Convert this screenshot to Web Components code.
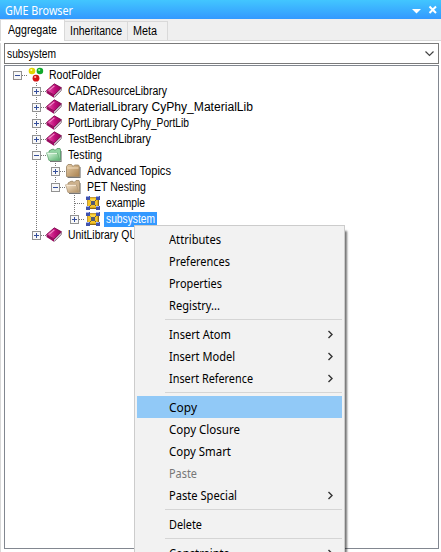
<!DOCTYPE html>
<html lang="en">
<head>
<meta charset="utf-8">
<title>GME Browser</title>
<style>
html,body{margin:0;height:100%;overflow:hidden;background:#fff}
body{font:12px/16px "Liberation Sans",Arial,sans-serif;color:#000}
</style>
</head>
<body>
<gme-browser></gme-browser>
<script>
function define(name, html, setup) {
  customElements.define(name, class extends HTMLElement {
    connectedCallback() {
      if (this.shadowRoot) return;
      const root = this.attachShadow({ mode: 'open' });
      root.innerHTML = html;
      if (setup) setup(this, root);
    }
  });
}

// A single-line label condensed or widened to fill the width in "w".
define('fit-label', `<style>:host{display:inline-block;white-space:pre;flex:none}span{display:inline-block;transform-origin:0 50%}</style><span><slot></slot></span>`,
  (el, root) => {
    const span = root.querySelector('span'), w = +el.getAttribute('w');
    if (!w) return;
    const natural = span.getBoundingClientRect().width;
    span.style.transform = `scaleX(${w / natural})`;
    el.style.width = w + 'px';
  });

const icons = {
  root: `<circle cx="4" cy="4" r="3.3" fill="#e0d400"/><circle cx="11.9" cy="4" r="3.3" fill="#12a82c"/><circle cx="8" cy="11.2" r="3.4" fill="#d41414"/><circle cx="3.3" cy="3" r="1.1" fill="#fffcb0"/><circle cx="11.2" cy="3" r="1.1" fill="#a0ffa8"/><circle cx="7.2" cy="10" r="1.1" fill="#ffb8a8"/>`,
  book: `<path d="M1 9.5 8.5 14.5 15.5 7.5V5L8 12z" fill="#3c0a2c"/><path d="M1.2 9.2 8.3 13.2 15 6.5" fill="none" stroke="#e8e0e8" stroke-width="1.2"/><path d="M.5 7.5 8.3.8 15.5 4.8 8 12z" fill="url(#b)" stroke="#720044" stroke-width=".8"/><path d="M.5 7.5V10L8 14.8V12z" fill="#99085e"/><path d="M3.3 7.1 8.4 2.8" stroke="#f391cc" stroke-width="1.1"/><defs><linearGradient id="b"><stop stop-color="#ef5db0"/><stop offset=".55" stop-color="#c00f7b"/><stop offset="1" stop-color="#95005b"/></linearGradient></defs>`,
  folder: `<path d="M2.5 14.5H15V4" fill="none" stroke="#777" stroke-width="1.2"/><path d="M1.5 13.5V3.5L3 1.5H6.5L8 3.5 9.5 2H13.5L14.3 3.2V13.5z" fill="url(#f)" stroke="#98805f" stroke-width=".8"/><path d="M2.3 5H13.5" stroke="#f3dec0"/><defs><linearGradient id="f" x2="1" y2="1"><stop stop-color="#e6cda9"/><stop offset="1" stop-color="#a98250"/></linearGradient></defs>`,
  open: `<path d="M4 14.5H15V4" fill="none" stroke="#777" stroke-width="1.2"/><path d="M3 13V4L6 2.3H8L9 3.5 11 1.5H14L14.5 3V13z" fill="#cdb18c" stroke="#9c8665" stroke-width=".8"/><path d="M.6 5.8H11.3L14.1 13.5H3z" fill="url(#o)" stroke="#b19a7c" stroke-width=".8"/><path d="M1.3 6.3H11" stroke="#fff0db"/><defs><linearGradient id="o" x2="1" y2="1"><stop stop-color="#f5e4cc"/><stop offset="1" stop-color="#b08e60"/></linearGradient></defs>`,
  green: `<path d="M4 14.5H15V4" fill="none" stroke="#777" stroke-width="1.2"/><path d="M3 13V4L6 2.3H8L9 3.5 11 1.5H14L14.5 3V13z" fill="#91d4a1" stroke="#519563" stroke-width=".8"/><path d="M.6 5.8H11.3L14.1 13.5H3z" fill="url(#g)" stroke="#6bac7a" stroke-width=".8"/><path d="M1.3 6.3H11" stroke="#effff0"/><defs><linearGradient id="g" x2="1" y2="1"><stop stop-color="#e1f8e3"/><stop offset="1" stop-color="#55b16d"/></linearGradient></defs>`,
  model: `<rect x="3" y="3" width="11" height="11" fill="#7d621a"/><rect x="2.5" y="2.5" width="10.5" height="10.5" fill="#f5c425" stroke="#a87a15" stroke-width=".7"/><path d="M3 3 13 13M13 3 3 13" stroke="#785d25" stroke-width="1"/><rect x="6" y="6" width="4" height="4" fill="#525a74"/><path d="M5 5H10" stroke="#ffe775"/><g fill="#4053ac"><rect x="1" y="1" width="4" height="4"/><rect x="11" y="1" width="4" height="4"/><rect x="1" y="11" width="4" height="4"/><rect x="11" y="11" width="4" height="4"/></g><path d="M1 1.5H4M11 1.5H14M1 11.5H4M11 11.5H14" stroke="#a5b4f0"/>`
};
define('tree-icon', `<style>:host{display:block;width:16px;height:16px;flex:none}svg{display:block}</style><svg width="16" height="16" viewBox="0 0 16 16"></svg>`,
  (el, root) => root.querySelector('svg').innerHTML = icons[el.getAttribute('name')]);

// One tree row: guide lines for each ancestor, an expander, an icon, a label.
define('tree-row', `<style>
:host{display:flex;height:16px;align-items:center}
#guides{display:flex}
svg{display:block;flex:none}
.t{padding:0 2px 0 2px;margin-left:4px;height:15px;line-height:15px;display:flex}
:host([selected]) .t{background:#3399ff;color:#fff}
:host([level="0"]) tree-icon{margin-left:1px}
:host([level="0"]) .t{margin-left:3px}
:host([level="3"]) tree-icon{margin-left:1px}
:host([level="3"]) .t{margin-left:3px}
</style><div id="guides"></div><tree-icon></tree-icon><div class="t"><slot></slot></div>`,
  (el, root) => {
    const level = +el.getAttribute('level');
    const lines = (el.getAttribute('lines') || '').split(',');
    const state = el.getAttribute('state');
    let h = '';
    for (let i = 0; i <= level; i++) {
      const kind = lines[i] || '', own = i === level;
      let d = '';
      if (kind.includes('u')) d += 'M9.5 0V8';
      if (kind.includes('d')) d += 'M9.5 8V16';
      if (own) d += 'M10 8.5H19';
      h += `<svg width="19" height="16" shape-rendering="crispEdges"><path d="${d}" stroke="#777" stroke-dasharray="1 1" fill="none"/>` +
        (own && state ? `<g transform="translate(5 4)"><rect x=".5" y=".5" width="8" height="8" fill="#f8f8f8" stroke="#929292"/><path d="${state === 'open' ? 'M2 4.5H7' : 'M2 4.5H7M4.5 2V7'}" stroke="#354f9b"/></g>` : '') + '</svg>';
    }
    root.querySelector('#guides').innerHTML = h;
    const icon = document.createElement('tree-icon');
    icon.setAttribute('name', el.getAttribute('icon'));
    root.querySelector('tree-icon').replaceWith(icon);
  });

define('title-bar', `<style>:host{display:flex;box-sizing:border-box;height:19px;padding:2px 2px 0 5px;align-items:center;background:linear-gradient(#42c6ff,#3399ff);color:#fff;font:12px/18px "Noto Sans",sans-serif}svg{margin-left:auto}</style><slot></slot><svg width="28" height="12" fill="#fff"><path d="M1 4H10L5.5 8.5z"/><path d="M18.5 1.5 25 8M25 1.5 18.5 8" stroke="#fff" stroke-width="2"/></svg>`);
define('tab-item', `<style>:host{display:block;box-sizing:border-box;height:19px;padding:1px 0 0 5px;border:1px solid #d9d9d9;border-left:0;border-bottom:0;background:#f0f0f0;line-height:17px}:host([active]){height:22px;background:#fff;padding:2px 0 0 7px;border-left:1px solid #d9d9d9}</style><slot></slot>`);
define('tab-strip', `<style>:host{display:flex;box-sizing:border-box;height:22px;align-items:flex-end;background:linear-gradient(#d9d9d9,#d9d9d9) bottom/100% 1px no-repeat #efefef}::slotted(tab-item:not([active])){margin-bottom:1px}</style><slot></slot>`);
define('combo-box', `<style>:host{display:flex;box-sizing:border-box;height:21px;margin:2px 2px 0 4px;border:1px solid #7a7a7a;align-items:center;padding:0 4px 0 2px;background:#fff}svg{margin-left:auto}</style><slot></slot><svg width="9" height="7" fill="none" stroke="#444" stroke-width="1.2"><path d="M.5 1.5 4.5 5.5 8.5 1.5"/></svg>`);
define('tree-view', `<style>:host{display:block;box-sizing:border-box;height:484px;margin:1px 2px 0 4px;border:1px solid #828790;background:#fff;padding:1px 0 0 3px}</style><slot></slot>`);

define('menu-item', `<style>:host{display:flex;height:22px;box-sizing:border-box;align-items:center;padding:0 9px 0 32px}::slotted(fit-label){padding-top:1px}:host([active]){background:#91c9f7}:host([disabled]){color:#777}svg{display:none;margin-left:auto}:host([submenu]) svg{display:block}</style><slot></slot><svg width="5" height="9" fill="none" stroke="#333" stroke-width="1.4"><path d="M.5 1 4 4.5 .5 8"/></svg>`);
define('menu-separator', `<style>:host{display:block;height:7px;box-sizing:border-box;padding:3px 0 0 28px}i{display:block;height:1px;background:#d5d5d5}</style><i></i>`);
define('context-menu', `<style>:host{display:block;position:absolute;left:134px;top:225px;width:211px;height:350px;box-sizing:border-box;padding:2px;border:1px solid #ccc;background:#f2f2f2;box-shadow:3px 5px 2px -1px rgba(0,0,0,.55);font:12px/20px "Noto Sans",sans-serif}</style><slot></slot>`);

define('gme-browser', `<style>:host{display:block;position:relative;width:441px;height:552px;overflow:hidden;background:#fff}
.pane{box-sizing:border-box;height:511px;border-left:1px solid #d9d9d9}
.pane combo-box,.pane tree-view{margin-left:3px}</style>
<title-bar><fit-label w="68">GME Browser</fit-label></title-bar>
<tab-strip><tab-item active style="width:65px"><fit-label w="49">Aggregate</fit-label></tab-item><tab-item style="width:63px"><fit-label w="52">Inheritance</fit-label></tab-item><tab-item style="width:40px"><fit-label w="24">Meta</fit-label></tab-item></tab-strip>
<div class="pane">
<combo-box><fit-label w="49">subsystem</fit-label></combo-box>
<tree-view>
<tree-row level="0" lines="" state="open" icon="root"><fit-label w="52">RootFolder</fit-label></tree-row>
<tree-row level="1" lines=",ud" state="closed" icon="book"><fit-label w="99">CADResourceLibrary</fit-label></tree-row>
<tree-row level="1" lines=",ud" state="closed" icon="book"><fit-label w="185">MaterialLibrary CyPhy_MaterialLib</fit-label></tree-row>
<tree-row level="1" lines=",ud" state="closed" icon="book"><fit-label w="121">PortLibrary CyPhy_PortLib</fit-label></tree-row>
<tree-row level="1" lines=",ud" state="closed" icon="book"><fit-label w="83">TestBenchLibrary</fit-label></tree-row>
<tree-row level="1" lines=",ud" state="open" icon="green"><fit-label w="34">Testing</fit-label></tree-row>
<tree-row level="2" lines=",ud,ud" state="closed" icon="folder"><fit-label w="84">Advanced Topics</fit-label></tree-row>
<tree-row level="2" lines=",ud,u" state="open" icon="open"><fit-label w="59">PET Nesting</fit-label></tree-row>
<tree-row level="3" lines=",ud,,ud" icon="model"><fit-label w="39">example</fit-label></tree-row>
<tree-row level="3" lines=",ud,,u" state="closed" icon="model" selected><fit-label w="49">subsystem</fit-label></tree-row>
<tree-row level="1" lines=",u" state="closed" icon="book"><fit-label w="69">UnitLibrary QU</fit-label></tree-row>
</tree-view>
</div>
<context-menu>
<menu-item><fit-label w="52">Attributes</fit-label></menu-item>
<menu-item><fit-label w="61">Preferences</fit-label></menu-item>
<menu-item><fit-label w="53">Properties</fit-label></menu-item>
<menu-item><fit-label w="51">Registry...</fit-label></menu-item>
<menu-separator></menu-separator>
<menu-item submenu><fit-label w="62">Insert Atom</fit-label></menu-item>
<menu-item submenu><fit-label w="66">Insert Model</fit-label></menu-item>
<menu-item submenu><fit-label w="84">Insert Reference</fit-label></menu-item>
<menu-separator></menu-separator>
<menu-item active><fit-label w="28">Copy</fit-label></menu-item>
<menu-item><fit-label w="71">Copy Closure</fit-label></menu-item>
<menu-item><fit-label w="62">Copy Smart</fit-label></menu-item>
<menu-item disabled><fit-label w="28">Paste</fit-label></menu-item>
<menu-item submenu><fit-label w="68">Paste Special</fit-label></menu-item>
<menu-separator></menu-separator>
<menu-item><fit-label w="33">Delete</fit-label></menu-item>
<menu-separator></menu-separator>
<menu-item submenu><fit-label w="60">Constraints</fit-label></menu-item>
</context-menu>`);
</script>
</body>
</html>
